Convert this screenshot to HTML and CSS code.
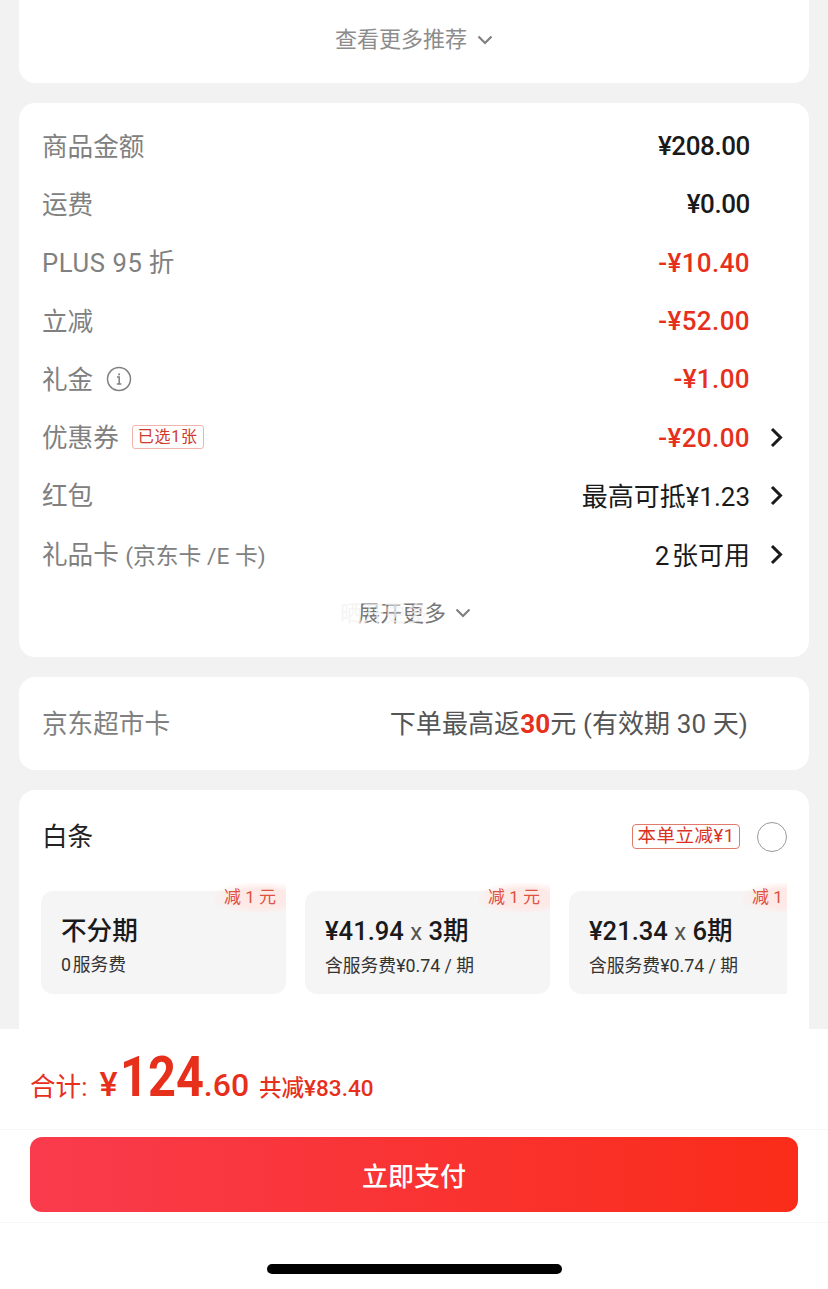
FILE: index.html
```html
<!DOCTYPE html>
<html lang="zh-CN">
<head>
  <meta charset="UTF-8">
  <meta name="viewport" content="width=device-width, initial-scale=1.0">
  <title>确认订单</title>
  <link rel="stylesheet" href="styles.css">
</head>
<body>

  <div class="page">
    <!-- Recommend card, cut off at the top -->
    <div class="card more-card">
      <div class="see-more">
        查看更多推荐
        <svg class="chev-down" width="16" height="10" viewBox="0 0 16 10"><path d="M1.500 1.500 8 8l6.500-6.500" /></svg>
      </div>
    </div>

    <!-- Price list -->
    <div class="card price-card">
      <div class="row">
        <div class="label">商品金额</div>
        <div class="value">¥208.00</div>
        <div class="arrow-slot"></div>
      </div>
      <div class="row">
        <div class="label">运费</div>
        <div class="value">¥0.00</div>
        <div class="arrow-slot"></div>
      </div>
      <div class="row">
        <div class="label"><span><span class="latin">PLUS 95</span> 折</span></div>
        <div class="value red">-¥10.40</div>
        <div class="arrow-slot"></div>
      </div>
      <div class="row">
        <div class="label">立减</div>
        <div class="value red">-¥52.00</div>
        <div class="arrow-slot"></div>
      </div>
      <div class="row">
        <div class="label">礼金
          <svg class="info" width="26" height="26" viewBox="0 0 26 26">
            <circle cx="13" cy="13" r="11.500" />
            <path d="M11 11h2.200v7M10.800 18h4.600" />
            <path class="dot" d="M12.200 7.500h1.800v1.800h-1.800z" />
          </svg>
        </div>
        <div class="value red">-¥1.00</div>
        <div class="arrow-slot"></div>
      </div>
      <div class="row">
        <div class="label">优惠券 <span class="chosen">已选1张</span></div>
        <div class="value red">-¥20.00</div>
        <div class="arrow-slot"><svg class="chev-right" width="13" height="21" viewBox="0 0 13 21"><path d="M2 2l8.500 8.500L2 19" /></svg></div>
      </div>
      <div class="row">
        <div class="label">红包</div>
        <div class="value normal">最高可抵¥1.23</div>
        <div class="arrow-slot"><svg class="chev-right" width="13" height="21" viewBox="0 0 13 21"><path d="M2 2l8.500 8.500L2 19" /></svg></div>
      </div>
      <div class="row">
        <div class="label"><span>礼品卡 <span class="label-sub">(京东卡 /E 卡)</span></span></div>
        <div class="value normal">2&#8202;张可用</div>
        <div class="arrow-slot"><svg class="chev-right" width="13" height="21" viewBox="0 0 13 21"><path d="M2 2l8.500 8.500L2 19" /></svg></div>
      </div>
      <div class="expand">
        <span class="expand-text">展开更多<span class="ghost">晒开更多</span></span>
        <svg class="chev-down" width="16" height="10" viewBox="0 0 16 10"><path d="M1.500 1.500 8 8l6.500-6.500" /></svg>
      </div>
    </div>

    <!-- Supermarket card -->
    <div class="card market-card">
      <div class="label">京东超市卡</div>
      <div class="market-text">下单最高返<b>30</b>元 (有效期 30 天)</div>
    </div>

    <!-- Baitiao -->
    <div class="card baitiao-card">
      <div class="baitiao-head">
        <div class="baitiao-title">白条</div>
        <div class="baitiao-right">
          <span class="cut-tag">本单立减¥1</span>
          <span class="radio"></span>
        </div>
      </div>
      <div class="plans">
        <div class="plan">
          <span class="plan-tag">减 1 元</span>
          <div class="plan-title">不分期</div>
          <div class="plan-sub">0&#8202;服务费</div>
        </div>
        <div class="plan">
          <span class="plan-tag">减 1 元</span>
          <div class="plan-title">¥41.94 <i>x</i> 3期</div>
          <div class="plan-sub">含服务费¥0.74 / 期</div>
        </div>
        <div class="plan">
          <span class="plan-tag">减 1 元</span>
          <div class="plan-title">¥21.34 <i>x</i> 6期</div>
          <div class="plan-sub">含服务费¥0.74 / 期</div>
        </div>
      </div>
    </div>
  </div>

  <!-- Bottom bar -->
  <div class="footer">
    <div class="total">
      <span class="total-label">合计:</span>
      <span class="total-yen">¥</span><span class="total-big">124</span><span class="total-small">.60</span>
      <span class="total-cut">共减¥83.40</span>
    </div>
    <div class="pay-wrap">
      <button class="pay">立即支付</button>
    </div>
    <div class="home-wrap"><div class="home-bar"></div></div>
  </div>

</body>
</html>
```

FILE: styles.css
```css
* {
  margin: 0;
  padding: 0;
  box-sizing: border-box;
  font-family: Roboto, "Noto Sans CJK SC", sans-serif;
}

body {
  width: 828px;
  height: 1289px;
  overflow: hidden;
  background-color: #f2f2f2;
}

.page {
  height: 1029px;
  overflow: hidden;
  padding: 0 19px;
  display: flex;
  flex-direction: column;
  gap: 20px;
}

.card {
  background-color: #fff;
  border-radius: 16px;
  flex-shrink: 0;
}

/* Top card */
.more-card {
  height: 83px;
  border-radius: 0 0 16px 16px;
  padding-top: 25px;
}

.see-more {
  display: flex;
  justify-content: center;
  align-items: center;
  gap: 10px;
  font-size: 22px;
  line-height: 30px;
  color: #8c8c8c;
}

.chev-down path {
  fill: none;
  stroke: #808080;
  stroke-width: 2.2;
}

/* Price rows */
.price-card {
  height: 554px;
  padding: 14px 22px 0 23px;
}

.row {
  display: flex;
  align-items: center;
  height: 58.3px;
}

.label {
  display: flex;
  align-items: center;
  gap: 13px;
  padding-bottom: 4px;
  font-size: 25.6px;
  color: #808080;
  margin-right: auto;
}

.latin {
  letter-spacing: 0.6px;
}

.label-sub {
  font-size: 22.8px;
}

.value {
  font-size: 26px;
  font-weight: 500;
  letter-spacing: -0.4px;
  color: #1a1a1a;
}

.value.red {
  letter-spacing: 0.4px;
  color: #e6301c;
}

.value.normal {
  font-weight: 400;
  letter-spacing: 0;
  padding-bottom: 2px;
}

.arrow-slot {
  width: 37px;
  display: flex;
  justify-content: flex-end;
  padding-right: 4px;
}

.chev-right path {
  fill: none;
  stroke: #1a1a1a;
  stroke-width: 3;
}

.info {
  margin-top: 4px;
}

.info circle,
.info path {
  fill: none;
  stroke: #808080;
  stroke-width: 1.500;
}

.info .dot {
  fill: #808080;
  stroke: none;
}

.chosen {
  width: 72px;
  height: 24px;
  margin-top: 3px;
  font-size: 16px;
  line-height: 21px;
  letter-spacing: 0.8px;
  text-align: center;
  color: #d0392a;
  border: 1px solid #f2b3ab;
  border-radius: 3px;
}

.expand {
  display: flex;
  justify-content: center;
  align-items: center;
  gap: 9px;
  height: 60px;
  padding-bottom: 4px;
  font-size: 22px;
  color: #777;
}

.expand .chev-down {
  margin-top: 4px;
}

.expand-text {
  position: relative;
}

.ghost {
  position: absolute;
  left: -18px;
  top: 0;
  color: rgba(242, 242, 242, 0.8);
  white-space: nowrap;
}

/* Supermarket card */
.market-card {
  height: 93px;
  padding: 0 61px 0 23px;
  display: flex;
  align-items: center;
}

.market-text {
  padding-bottom: 4px;
  font-size: 26px;
  letter-spacing: 0.1px;
  color: #555;
}

.market-text b {
  font-weight: 700;
  color: #e6301c;
}

/* Baitiao */
.baitiao-card {
  height: 300px;
  padding: 0 22px;
}

.baitiao-head {
  height: 92px;
  display: flex;
  justify-content: space-between;
  align-items: center;
  padding-top: 1px;
}

.baitiao-title {
  font-size: 25.6px;
  color: #222;
  padding: 0 0 5px 1px;
}

.baitiao-right {
  display: flex;
  align-items: center;
  gap: 17px;
}

.cut-tag {
  width: 108px;
  height: 25px;
  line-height: 22px;
  text-align: center;
  font-size: 18.500px;
  letter-spacing: 0.5px;
  color: #d9321f;
  border: 1px solid #e07a6c;
  border-radius: 4px;
}

.radio {
  width: 30px;
  height: 30px;
  border: 1px solid #999;
  border-radius: 50%;
}

.plans {
  display: flex;
  gap: 19px;
  overflow: hidden;
  margin-top: 1px;
  padding-top: 8px;
}

.plan {
  position: relative;
  flex: 0 0 245px;
  height: 103px;
  padding: 23px 20px 0;
  border-radius: 12px;
  background-color: #f5f5f6;
}

.plan-tag {
  position: absolute;
  top: -8px;
  right: 0;
  width: 72px;
  height: 30px;
  padding-right: 10px;
  line-height: 28px;
  text-align: right;
  font-size: 17px;
  color: #e0513f;
  background: radial-gradient(ellipse at 65% 50%, #fdeae7 45%, rgba(253, 234, 231, 0) 78%);
  white-space: nowrap;
}

.plan-title {
  font-size: 25.6px;
  line-height: 34px;
  font-weight: 500;
  color: #1a1a1a;
}

.plan-title i {
  font-style: normal;
  font-weight: 400;
  font-size: 24px;
  color: #555;
}

.plan-sub {
  margin-top: 5px;
  font-size: 17.800px;
  line-height: 24px;
  color: #333;
  white-space: nowrap;
}

/* Bottom bar */
.footer {
  height: 260px;
  background-color: #fff;
}

.total {
  height: 101px;
  padding: 17px 30px 0;
  display: flex;
  align-items: baseline;
  color: #e6301c;
  border-bottom: 1px solid #f7f7f7;
}

.total-label {
  font-size: 25.6px;
  margin-right: 12px;
}

.total-yen {
  font-size: 34px;
  font-weight: 500;
  margin-right: 3px;
}

.total-big {
  display: inline-block;
  font-size: 56px;
  font-weight: 700;
  line-height: 62px;
  transform: scaleX(0.87);
  transform-origin: left;
  margin-right: -13px;
}

.total-small {
  font-size: 32px;
  font-weight: 500;
  margin-right: 10px;
}

.total-cut {
  font-size: 22.500px;
  font-weight: 500;
}

.pay-wrap {
  height: 93px;
  padding: 7px 30px 0;
  border-bottom: 1px solid #f7f7f7;
}

.pay {
  display: block;
  width: 768px;
  height: 75px;
  border: none;
  border-radius: 12px;
  background: linear-gradient(to right, #f93b4d, #fa2c19);
  color: #fff;
  font-size: 26px;
  font-weight: 500;
}

.home-wrap {
  padding-top: 41px;
  display: flex;
  justify-content: center;
}

.home-bar {
  width: 295px;
  height: 10px;
  border-radius: 5px;
  background-color: #000;
}
```
